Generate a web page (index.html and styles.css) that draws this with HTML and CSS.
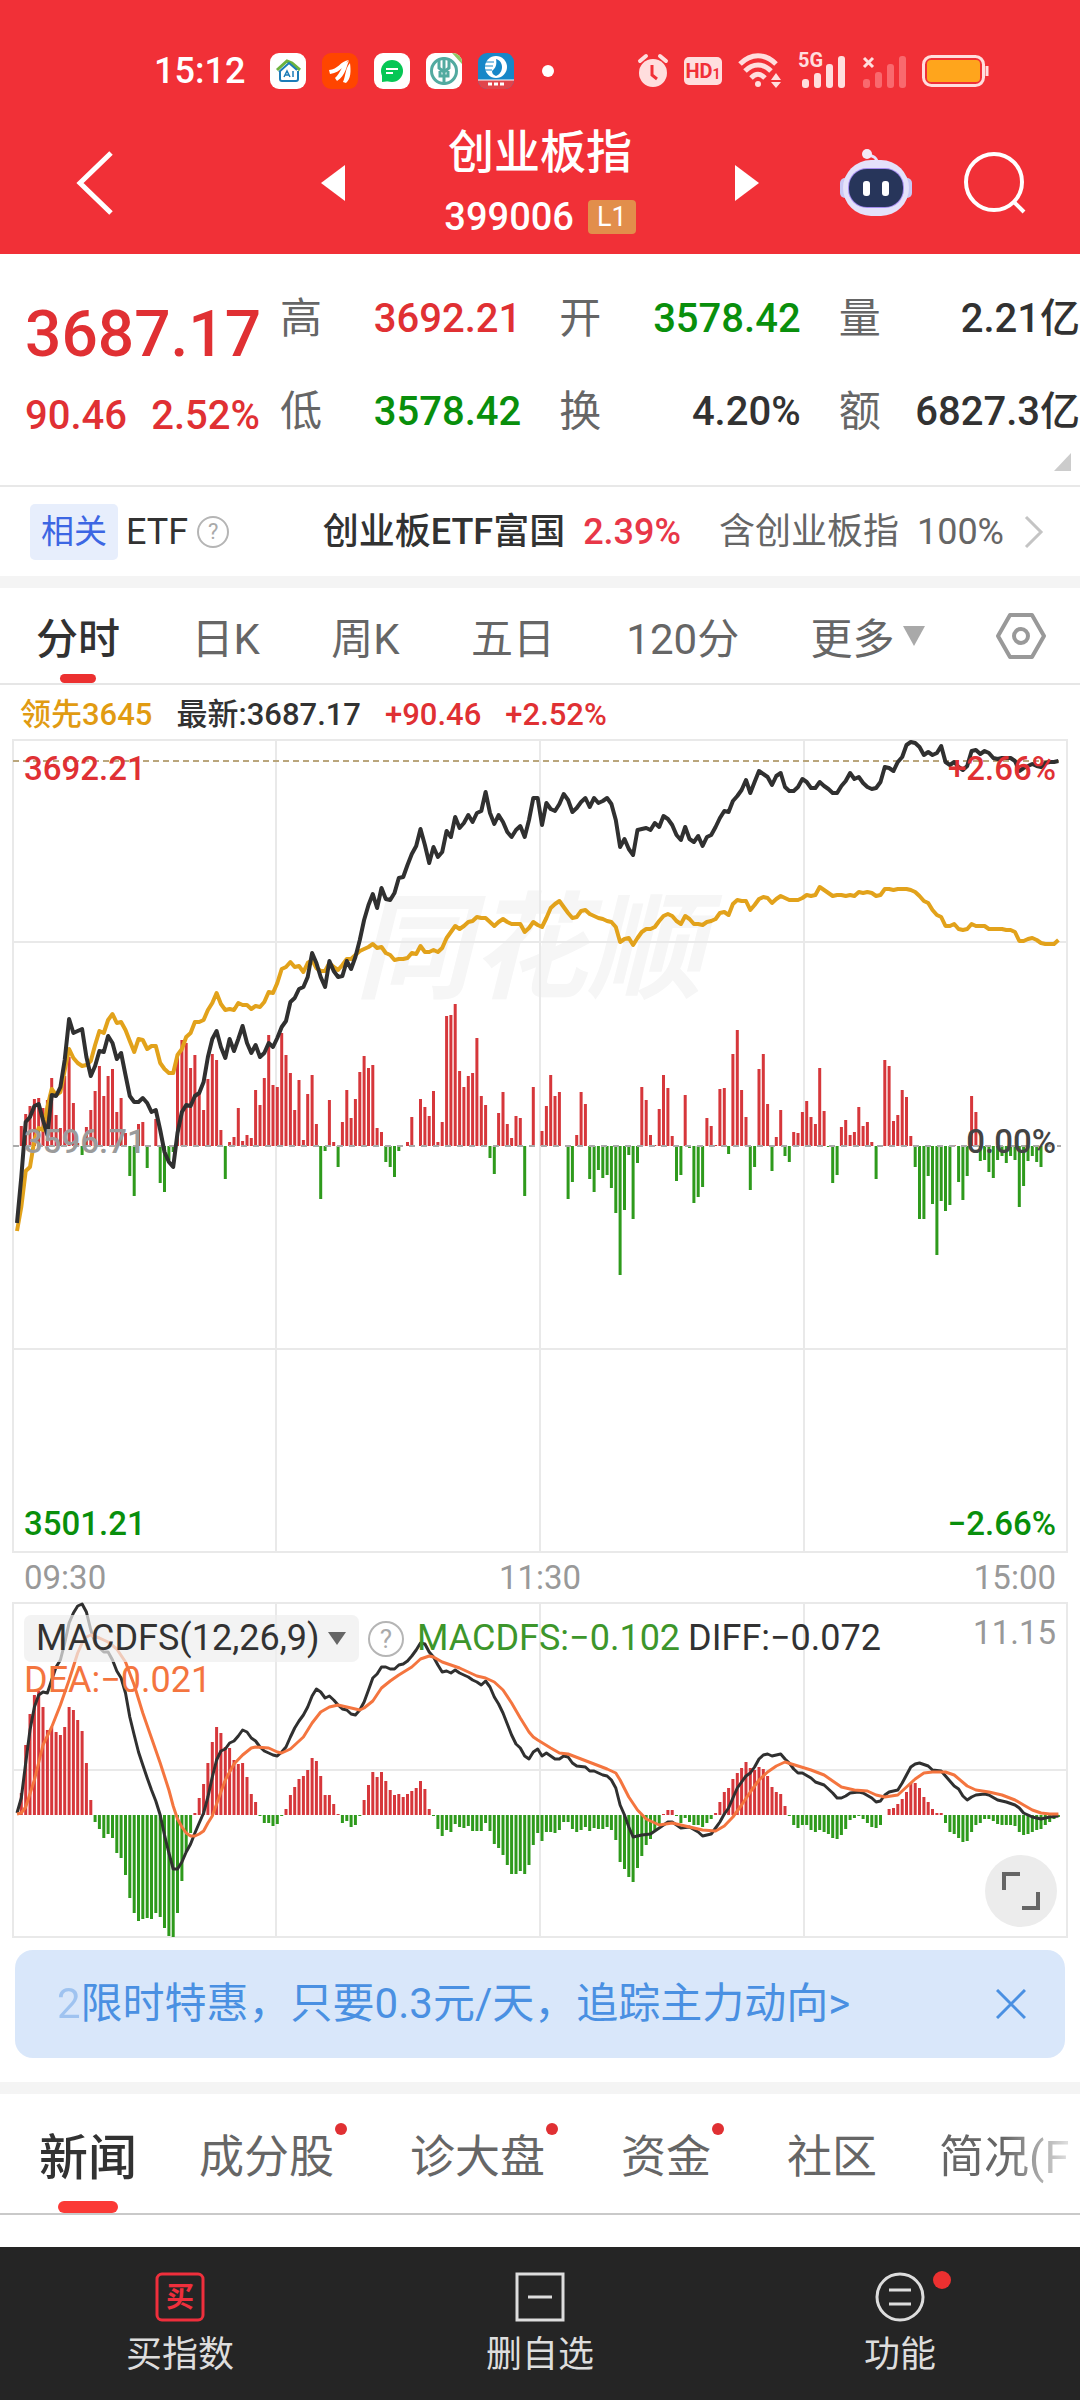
FILE: index.html
```html
<!DOCTYPE html>
<html lang="zh-CN">
<head>
  <meta charset="UTF-8">
  <meta name="viewport" content="width=device-width">
  <title>创业板指 399006</title>
  <link rel="stylesheet" href="styles.css">
</head>
<body>
  <header class="top">
    <!-- Status bar -->
    <div class="status">
      <div class="status-left">
        <span class="clock">15:12</span>
        <svg width="36" height="36" viewBox="0 0 36 36">
          <rect width="36" height="36" rx="9" fill="#fff"/>
          <path d="M10 18v8a2 2 0 0 0 2 2h14a2 2 0 0 0 2-2v-8" fill="none" stroke="#1c7cb8" stroke-width="2"/>
          <path d="M7 17 17 8l5 2 8 7" fill="none" stroke="#6cb33f" stroke-width="3"/>
          <path d="M9 19 19 10l8 7" fill="none" stroke="#1c7cb8" stroke-width="2"/>
          <path d="M14 24l3-6 3 6m-5-2h4M23 18v6" fill="none" stroke="#1c7cb8" stroke-width="1.5"/>
        </svg>
        <svg width="36" height="36" viewBox="0 0 36 36">
          <rect width="36" height="36" rx="9" fill="#ff4500"/>
          <path d="M7 17C16 17 18 8 27 7 21 12 20 19 8 21zM13 25c6-5 6-13 14-17-3 6-3 14-12 20zM21 29c3-7 2-13 7-19 1 8 1 16-4 20z" fill="#fff"/>
        </svg>
        <svg width="36" height="36" viewBox="0 0 36 36">
          <rect width="36" height="36" rx="9" fill="#fff"/>
          <circle cx="18" cy="18" r="11" fill="#06c755"/>
          <path d="M8 19v10l8-1z" fill="#06c755"/>
          <path d="M12 16h12M12 20h7" stroke="#fff" stroke-width="2"/>
        </svg>
        <svg width="36" height="36" viewBox="0 0 36 36">
          <rect width="36" height="36" rx="9" fill="#fff"/>
          <circle cx="18" cy="18" r="12.500" fill="none" stroke="#52aaa0" stroke-width="3"/>
          <path d="M18 4v28M13 7v8l5 4 5-4V7M14 18v5h8v-5" fill="none" stroke="#52aaa0" stroke-width="3"/>
          <path d="M26 0h1a9 9 0 0 1 9 9v2z" fill="#8fc866"/>
        </svg>
        <svg width="36" height="36" viewBox="0 0 36 36">
          <rect width="36" height="36" rx="9" fill="#1787c8"/>
          <path d="M0 27h36a9 9 0 0 1-9 9H9a9 9 0 0 1-9-9z" fill="#e0454c"/>
          <path d="M0 27h36" stroke="#fff"/>
          <circle cx="18" cy="14" r="11" fill="#fff"/>
          <path d="M18 6c8 2 8 14 0 17-3-1-4-3-4-5 4-3 5-7 4-12z" fill="#1787c8"/>
          <path d="M7 9h9M6 13h9M7 17h7" stroke="#1787c8"/>
          <path d="M10 31h4m2 0h4m2 0h4" stroke="#fff" stroke-width="3"/>
        </svg>
        <i class="more-dot"></i>
      </div>
      <div class="status-right">
        <svg width="32" height="36" viewBox="0 0 32 36" fill="none" stroke="#ffdede">
          <circle cx="16" cy="20" r="14" fill="#ffdede" stroke="none"/>
          <path d="M3 8l6-5M29 8l-6-5" stroke-width="4" stroke-linecap="round"/>
          <path d="M15 12v10l5 4" stroke="#f13037" stroke-width="3"/>
        </svg>
        <span class="hd">HD<small>1</small></span>
        <svg width="46" height="36" viewBox="0 0 46 36" fill="none" stroke="#ffdede" stroke-width="5">
          <path d="M3 11c11-11 25-11 36 0M8 18c8-8 18-8 26 0M14 25c5-5 9-5 14 0"/>
          <circle cx="21" cy="31" r="3" fill="#ffdede" stroke="none"/>
          <path d="M34 27l5-7 5 7zM34 29l5 6 5-6z" fill="#ffdede" stroke="none"/>
        </svg>
        <span class="cell">
          <b>5G</b>
          <svg width="48" height="36" viewBox="0 0 48 36" fill="#ffdede">
            <rect x="4" y="26" width="7" height="9" rx="3"/><rect x="16" y="20" width="7" height="15" rx="3"/>
            <rect x="28" y="11" width="7" height="24" rx="3"/><rect x="40" y="3" width="7" height="32" rx="3"/>
          </svg>
        </span>
        <svg width="46" height="36" viewBox="0 0 46 36" fill="#f9696e">
          <path d="M3 5l9 9m0-9l-9 9" stroke="#ffdede" stroke-width="3"/>
          <rect x="2" y="26" width="7" height="9" rx="3"/><rect x="14" y="19" width="7" height="16" rx="3"/>
          <rect x="26" y="11" width="7" height="24" rx="3"/><rect x="38" y="3" width="7" height="32" rx="3"/>
        </svg>
        <svg width="68" height="32" viewBox="0 0 68 32">
          <rect x="1.500" y="1.500" width="60" height="29" rx="8" fill="none" stroke="#ffdede" stroke-width="3"/>
          <rect x="5" y="5" width="53" height="22" rx="4" fill="#ffa51c"/>
          <path d="M65 11v10" stroke="#ffdede" stroke-width="3"/>
        </svg>
      </div>
    </div>

    <!-- Title bar -->
    <div class="nav">
      <button class="icon-btn" aria-label="返回">
        <svg width="38" height="64" viewBox="0 0 38 64" fill="none" stroke="#fff" stroke-width="5"><path d="M35 2 4 32l31 30"/></svg>
      </button>
      <div class="nav-title">
        <button class="icon-btn" aria-label="上一个"><svg width="24" height="36" viewBox="0 0 24 36"><path d="M24 0v36L0 18z" fill="#fff"/></svg></button>
        <div class="name">
          <h1>创业板指</h1>
          <p>399006 <span class="level">L1</span></p>
        </div>
        <button class="icon-btn" aria-label="下一个"><svg width="24" height="36" viewBox="0 0 24 36"><path d="M0 0v36l24-18z" fill="#fff"/></svg></button>
      </div>
      <div class="nav-right">
        <button class="icon-btn" aria-label="助手">
          <svg width="72" height="68" viewBox="0 0 72 68">
            <path d="M37 16c1-7-3-9-9-10" fill="none" stroke="#e7e2fb" stroke-width="3"/>
            <circle cx="27" cy="5" r="5" fill="#f4e9f8"/>
            <rect x="0" y="29" width="12" height="20" rx="5" fill="#c9c8f4"/><rect x="60" y="29" width="12" height="20" rx="5" fill="#c9c8f4"/>
            <rect x="3" y="11" width="66" height="56" rx="28" fill="#e4e1fa"/>
            <rect x="8" y="19" width="56" height="40" rx="19" fill="#a58cf0"/>
            <rect x="9" y="20" width="54" height="38" rx="18" fill="#27355a"/>
            <rect x="23" y="32" width="7" height="15" rx="3" fill="#fff"/><rect x="42" y="32" width="7" height="15" rx="3" fill="#fff"/>
          </svg>
        </button>
        <button class="icon-btn" aria-label="搜索">
          <svg width="62" height="62" viewBox="0 0 62 62" fill="none" stroke="#fff" stroke-width="4"><circle cx="30" cy="30" r="28"/><path d="M50 50l10 10"/></svg>
        </button>
      </div>
    </div>
  </header>

  <!-- Quote -->
  <section class="quote">
    <div class="last up">
      <strong>3687.17</strong>
      <p><span>90.46</span><span>2.52%</span></p>
    </div>
    <dl class="figures">
      <div><dt>高</dt><dd class="up">3692.21</dd></div>
      <div><dt>开</dt><dd class="down">3578.42</dd></div>
      <div><dt>量</dt><dd>2.21亿</dd></div>
      <div><dt>低</dt><dd class="down">3578.42</dd></div>
      <div><dt>换</dt><dd>4.20%</dd></div>
      <div><dt>额</dt><dd>6827.3亿</dd></div>
    </dl>
    <i class="corner"></i>
  </section>

  <a class="etf" href="#etf">
    <span class="tag">相关</span>
    <span class="etf-label">ETF</span>
    <span class="help">?</span>
    <span class="etf-name">创业板ETF富国</span>
    <span class="etf-pct">2.39%</span>
    <span class="etf-part">含创业板指&nbsp; 100%</span>
    <svg width="20" height="34" viewBox="0 0 20 34" fill="none" stroke="#c4c4c4" stroke-width="3"><path d="M2 2l15 15L2 32"/></svg>
  </a>

  <!-- Period tabs -->
  <nav class="periods">
    <button class="on">分时</button>
    <button>日K</button>
    <button>周K</button>
    <button>五日</button>
    <button>120分</button>
    <button aria-haspopup="menu">更多<svg width="22" height="20" viewBox="0 0 22 20"><path d="M0 0h22L11 20z" fill="#a9a9a9"/></svg></button>
    <button aria-label="设置">
      <svg width="50" height="48" viewBox="0 0 50 48" fill="none" stroke="#999" stroke-width="4" stroke-linejoin="round"><path d="M14 3h22l12 21-12 21H14L2 24z"/><circle cx="25" cy="24" r="7"/></svg>
    </button>
  </nav>

  <main class="charts">
    <p class="legend">
      <span class="lead">领先3645</span><span>最新:3687.17</span><span class="up">+90.46</span><span class="up">+2.52%</span>
    </p>

    <div class="plot">
      <svg id="priceChart" viewBox="0 0 1054 812">
        <text class="watermark" x="342" y="249">同花顺</text>
      </svg>
      <span class="mark top-left up">3692.21</span>
      <span class="mark top-right up">+2.66%</span>
      <span class="mark mid-left">3596.71</span>
      <span class="mark mid-right">0.00%</span>
      <span class="mark bottom-left down">3501.21</span>
      <span class="mark bottom-right down">−2.66%</span>
    </div>

    <div class="times"><span>09:30</span><span>11:30</span><span>15:00</span></div>

    <div class="plot">
      <svg id="macdChart" viewBox="0 0 1054 334"></svg>
      <div class="macd-head">
        <label class="picker">
          <select aria-label="指标"><option>MACDFS(12,26,9)</option></select>
          <svg width="18" height="13" viewBox="0 0 18 13"><path d="M0 0h18L9 13z" fill="#666"/></svg>
        </label>
        <span class="help big">?</span>
        <span class="macd-val">MACDFS:−0.102</span>
        <span>DIFF:−0.072</span>
        <span class="dea">DEA:−0.021</span>
      </div>
      <span class="mark macd-max">11.15</span>
      <button class="expand" aria-label="全屏">
        <svg width="38" height="38" viewBox="0 0 38 38" fill="none" stroke="#666" stroke-width="4"><path d="M2 18V2h16M20 36h16V20"/></svg>
      </button>
    </div>

    <div class="promo">
      <a href="#promo"><span class="fade">2</span>限时特惠，只要0.3元/天，追踪主力动向&gt;</a>
      <button class="icon-btn" aria-label="关闭">
        <svg width="30" height="30" viewBox="0 0 30 30" stroke="#4a90e2" stroke-width="3"><path d="M1 1l28 28M29 1L1 29"/></svg>
      </button>
    </div>
  </main>

  <!-- News tabs -->
  <nav class="news">
    <button class="on">新闻</button>
    <button class="dot">成分股</button>
    <button class="dot">诊大盘</button>
    <button class="dot">资金</button>
    <button>社区</button>
    <button class="more">简况(F</button>
  </nav>

  <footer class="bar">
    <button>
      <svg width="50" height="50" viewBox="0 0 50 50" fill="none" stroke="#ef2f3c" stroke-width="3">
        <rect x="2" y="2" width="46" height="46" rx="5"/>
        <text x="25" y="35" class="buy">买</text>
      </svg>
      买指数
    </button>
    <button>
      <svg width="50" height="50" viewBox="0 0 50 50" fill="none" stroke="#ddd" stroke-width="3"><rect x="2" y="2" width="46" height="46"/><path d="M13 25h24"/></svg>
      删自选
    </button>
    <button class="dot">
      <svg width="50" height="50" viewBox="0 0 50 50" fill="none" stroke="#ddd" stroke-width="3"><circle cx="25" cy="25" r="23"/><path d="M14 18h22M14 32h22"/></svg>
      功能
    </button>
  </footer>

  <script src="chart.js"></script>
</body>
</html>
```
FILE: styles.css
```css
* { box-sizing: border-box; }
body {
  margin: 0;
  min-height: 100vh;
  display: flex;
  flex-direction: column;
  background: #fff;
  color: #323232;
  font-family: Roboto, "Noto Sans CJK SC", sans-serif;
  font-size: 36px;
  overflow-x: hidden;
}
h1, p, dl, dd { margin: 0; }
button {
  border: 0;
  padding: 0;
  background: none;
  color: inherit;
  font: inherit;
}
a { color: inherit; text-decoration: none; }
svg { display: block; flex: none; }
.up { color: #e03033; }
.down { color: #098f0c; }

/* header */
.top {
  background: #f13037;
  color: #fff;
}
.status {
  display: flex;
  justify-content: space-between;
  align-items: center;
  height: 112px;
  padding: 30px 90px 0 154px;
}
.status-left, .status-right {
  display: flex;
  align-items: center;
}
.status-left { gap: 16px; }
.clock {
  width: 100px;
  font-weight: 500;
}
.more-dot {
  width: 12px;
  height: 12px;
  margin-left: 12px;
  border-radius: 50%;
  background: #fff;
}
.status-right { gap: 15px; }
.hd {
  display: flex;
  align-items: flex-end;
  justify-content: center;
  width: 38px;
  height: 28px;
  border-radius: 5px;
  background: #ffdede;
  color: #f13037;
  font-size: 20px;
  font-weight: 700;
  line-height: 28px;
}
.hd small { font-size: 14px; line-height: 22px; }
.cell { position: relative; }
.cell b {
  position: absolute;
  left: 0;
  top: -3px;
  color: #ffdede;
  font-size: 20px;
  line-height: 20px;
}
.nav {
  display: grid;
  grid-template-columns: 1fr 438px 1fr;
  height: 142px;
  padding: 0 54px 0 76px;
  align-items: center;
}
.nav-title {
  display: flex;
  justify-content: space-between;
  align-items: center;
  margin-left: -11px;
  margin-right: 11px;
}
.name { text-align: center; }
.name h1 {
  font-size: 46px;
  font-weight: 500;
  line-height: 68px;
}
.name p {
  display: flex;
  justify-content: center;
  align-items: center;
  gap: 14px;
  font-size: 38px;
  font-weight: 500;
  line-height: 62px;
}
.level {
  padding: 0 9px;
  border-radius: 4px;
  background: #e28e4b;
  font-size: 27px;
  font-weight: 400;
  line-height: 34px;
}
.nav-right {
  display: flex;
  justify-content: flex-end;
  align-items: center;
  gap: 52px;
}

/* quote */
.quote {
  position: relative;
  display: flex;
  gap: 20px;
  height: 231px;
  padding: 18px 0 0 25px;
  font-size: 40px;
  font-weight: 500;
}
.last { width: 235px; }
.last strong {
  display: block;
  font-size: 64px;
  font-weight: 500;
  line-height: 90px;
  padding-top: 18px;
}
.last p {
  display: flex;
  justify-content: space-between;
  line-height: 72px;
}
.figures {
  flex: 1;
  display: grid;
  grid-template-columns: repeat(3, 1fr);
  grid-auto-rows: 93px;
  column-gap: 38px;
}
.figures div {
  display: flex;
  justify-content: space-between;
  align-items: center;
}
.figures dt {
  color: #666;
  font-size: 42px;
  font-weight: 400;
  line-height: 60px;
}
.figures dd {
  line-height: 60px;
  white-space: nowrap;
}
.corner {
  position: absolute;
  right: 9px;
  bottom: 14px;
  border: solid transparent;
  border-width: 0 0 18px 17px;
  border-bottom-color: #ccc;
}
.etf {
  display: flex;
  align-items: center;
  height: 91px;
  padding: 0 36px 0 30px;
  border-top: 2px solid #e8e8e8;
  line-height: 56px;
  white-space: nowrap;
}
.tag {
  padding: 0 11px;
  margin-right: 8px;
  border-radius: 5px;
  background: #e7eefc;
  color: #3c66e3;
  font-size: 33px;
}
.help {
  width: 32px;
  height: 32px;
  margin-left: 9px;
  border: 2px solid #b5b5b5;
  border-radius: 50%;
  color: #aaa;
  font-size: 22px;
  line-height: 28px;
  text-align: center;
}
.etf-name {
  margin-left: auto;
  font-weight: 500;
}
.etf-pct {
  margin: 0 38px 0 18px;
  color: #e83748;
  font-weight: 500;
}
.etf-part {
  margin-right: 20px;
  color: #666;
}

/* period tabs */
.periods {
  display: flex;
  justify-content: space-between;
  height: 109px;
  padding: 0 34px 0 36px;
  border-top: 12px solid #f4f4f4;
  border-bottom: 2px solid #e6e6e6;
  color: #666;
  font-size: 42px;
}
.periods button {
  position: relative;
  display: flex;
  align-items: center;
  gap: 8px;
}
.on {
  color: #323232;
  font-weight: 500;
}
.on::after {
  content: "";
  position: absolute;
  left: 50%;
  bottom: 0;
  width: 36px;
  height: 9px;
  margin-left: -18px;
  border-radius: 5px;
  background: #ec3030;
}

/* charts */
.charts {
  padding: 0 13px 24px;
  border-bottom: 12px solid #f4f4f4;
}
.legend {
  display: flex;
  gap: 24px;
  padding: 4px 0 0 7px;
  font-size: 31px;
  font-weight: 500;
  line-height: 51px;
}
.lead { color: #e19b12; }
.plot {
  position: relative;
  font-size: 33px;
}
.plot > svg {
  width: 100%;
  height: auto;
  overflow: visible;
}
.watermark {
  fill: #f6f6f6;
  font-size: 116px;
  font-weight: 700;
  font-style: italic;
}
.grid { fill: none; stroke: #e9e9e9; stroke-width: 2; }
.zero { stroke: #aaa; stroke-width: 2; stroke-dasharray: 6 6; }
.last-line { stroke: #baa67c; stroke-width: 2; stroke-dasharray: 6 4; }
.bar-up { fill: #d6373b; }
.bar-down { fill: #2e9a1c; }
.line { fill: none; stroke-width: 4; stroke-linejoin: round; }
.thin { stroke-width: 3; }
.black { stroke: #303030; }
.yellow { stroke: #e2a21b; }
.orange { stroke: #f4753f; }
.mark {
  position: absolute;
  font-weight: 500;
  line-height: 40px;
}
.top-left, .mid-left, .bottom-left { left: 11px; }
.top-right, .mid-right, .bottom-right, .macd-max { right: 11px; }
.top-left, .top-right { top: 9px; }
.mid-left, .mid-right { top: 382px; }
.bottom-left, .bottom-right { bottom: 8px; }
.mid-left { color: #9b9b9b; }
.mid-right { color: #444; }
.macd-max { top: 10px; color: #999; font-weight: 400; }
.times {
  display: flex;
  justify-content: space-between;
  padding: 0 11px;
  color: #999;
  font-size: 33px;
  line-height: 51px;
}
.macd-head {
  position: absolute;
  left: 11px;
  top: 12px;
  display: flex;
  flex-wrap: wrap;
  align-items: center;
  width: 900px;
  font-size: 36px;
  line-height: 47px;
}
.picker {
  display: flex;
  align-items: center;
  gap: 8px;
  padding: 0 13px 0 12px;
  border-radius: 7px;
  background: rgba(238, 238, 238, 0.7);
}
.picker select {
  appearance: none;
  border: 0;
  padding: 0;
  background: none;
  color: inherit;
  font: inherit;
}
.big {
  width: 36px;
  height: 36px;
  margin-right: 13px;
  font-size: 26px;
  line-height: 32px;
}
.macd-val {
  margin-right: 8px;
  color: #3d962b;
}
.dea {
  width: 100%;
  color: #f4753f;
  line-height: 36px;
}
.expand {
  position: absolute;
  right: 10px;
  bottom: 10px;
  display: grid;
  place-items: center;
  width: 72px;
  height: 72px;
  border-radius: 50%;
  background: #ececec;
}
.promo {
  display: flex;
  justify-content: space-between;
  align-items: center;
  height: 108px;
  margin: 13px 2px 0;
  padding: 0 39px 0 42px;
  border-radius: 18px;
  background: #d9e7fa;
  color: #4a90e2;
  font-size: 42px;
  line-height: 60px;
  white-space: nowrap;
}
.fade { opacity: 0.4; }

/* bottom */
.news {
  display: flex;
  gap: 62px;
  height: 121px;
  padding-left: 39px;
  border-bottom: 2px solid #c9c9c9;
  color: #666;
  font-size: 45px;
  white-space: nowrap;
}
.news button { position: relative; flex: none; }
.news .on { font-size: 49px; }
.news .on::after {
  width: 60px;
  height: 12px;
  margin-left: -30px;
  border-radius: 6px;
  background: #fb3a36;
}
.news .dot { padding-right: 14px; }
.news .dot::after {
  content: "";
  position: absolute;
  right: 1px;
  top: 29px;
  width: 12px;
  height: 12px;
  border-radius: 50%;
  background: #e03033;
}
.news .more { mask-image: linear-gradient(to right, #000 50%, rgba(0, 0, 0, 0.2)); }
.bar {
  display: grid;
  grid-template-columns: repeat(3, 1fr);
  height: 153px;
  margin-top: auto;
  background: #252525;
  color: #ddd;
}
.bar button {
  position: relative;
  display: flex;
  flex-direction: column;
  align-items: center;
  gap: 6px;
  padding-top: 25px;
  line-height: 54px;
}
.bar .dot::after {
  content: "";
  position: absolute;
  left: 50%;
  top: 24px;
  width: 18px;
  height: 18px;
  margin-left: 33px;
  border-radius: 50%;
  background: #ec3030;
}
.buy {
  fill: #ef2f3c;
  stroke: none;
  font-size: 28px;
  font-weight: 700;
  text-anchor: middle;
}
```
FILE: chart.js
```javascript
// one value per trading minute, y in chart units from the top
const price = [483,437,382,377,366,364,380,395,355,356,347,320,279,293,291,289,317,336,326,311,312,296,303,319,313,335,356,362,362,358,363,372,370,390,412,422,427,393,372,365,366,356,353,342,317,299,291,307,318,299,311,299,286,303,313,305,317,313,303,307,
  298,287,281,262,258,249,247,237,213,223,237,247,221,231,237,236,221,229,217,200,180,165,154,168,148,159,160,153,138,137,125,114,106,89,105,123,107,117,112,91,97,77,88,83,75,82,73,71,52,73,84,75,82,92,97,90,86,97,80,58,
  58,85,63,69,71,64,54,60,72,68,62,58,67,58,63,61,58,64,80,107,99,109,115,90,89,88,90,83,87,76,79,85,95,100,87,99,102,96,106,97,95,87,78,71,72,61,56,50,40,53,42,31,34,37,45,36,33,47,51,51,
  47,39,42,48,48,42,46,49,53,53,46,41,33,39,37,43,47,49,48,42,27,28,31,22,17,5,2,3,7,15,12,15,13,6,22,25,22,27,30,26,11,10,14,11,13,18,19,18,18,18,21,31,28,26,24,26,27,23,22,22,21];

const lead = [491,467,431,427,400,388,390,367,349,355,352,330,309,318,323,326,325,321,305,291,293,280,274,283,282,290,301,312,299,300,309,306,306,323,329,333,333,315,309,297,293,282,282,280,270,263,253,264,270,269,270,263,265,265,269,266,267,262,252,253,
  243,229,227,222,227,226,232,223,220,228,231,231,223,227,230,225,219,219,215,211,209,207,204,208,207,213,215,220,219,219,218,213,214,206,212,212,210,212,208,198,192,186,189,186,182,181,177,178,178,182,186,182,179,182,184,184,184,192,188,182,
  185,187,178,168,164,161,167,173,178,177,171,170,174,176,178,179,181,182,187,202,199,198,205,198,192,189,189,187,181,176,174,176,181,184,176,179,184,184,185,182,181,179,173,172,175,164,160,161,161,170,165,159,157,158,163,159,156,158,160,160,
  160,158,155,156,155,147,150,153,156,155,155,156,155,156,152,153,152,153,156,155,149,149,150,149,149,149,150,152,156,161,163,170,175,177,186,186,184,189,190,189,184,186,186,186,189,189,189,189,190,190,192,201,201,199,198,200,203,204,204,204,200];

const volume = [0,20,32,40,47,48,38,46,68,31,18,70,89,43,3,-9,19,36,55,80,50,70,77,34,48,13,-30,-50,22,24,-22,0,27,-37,-46,-14,-6,90,106,103,78,91,52,36,67,92,86,16,-33,4,9,38,5,11,8,56,41,68,111,61,
  59,113,91,73,36,66,6,52,71,22,-53,-5,46,4,-21,24,56,28,47,74,90,78,81,18,14,-16,-21,-31,-5,0,4,29,0,47,39,30,55,4,24,130,131,142,75,59,70,73,108,50,41,-12,-28,33,54,22,8,30,28,-50,0,59,
  0,15,40,71,50,54,0,-53,-36,11,54,42,-33,-46,-24,-32,-29,-42,-67,-129,-64,-9,-73,-17,59,46,11,1,37,71,58,10,-35,-29,51,-2,-57,-51,-41,28,20,1,57,58,-8,92,116,56,29,-44,-21,77,92,42,-25,9,36,-10,-16,14,
  13,34,45,29,22,78,35,-1,-37,-29,19,26,11,14,39,20,24,4,-33,-1,86,80,25,31,56,49,10,-21,-73,-73,-30,-58,-109,-55,-65,-59,1,-36,-54,-30,50,34,-15,-14,-26,-32,-14,-10,-17,-10,-14,-61,-40,-15,-10,-16,-21,0,0,0,0];

const macd = [0,22,70,101,120,124,108,85,88,83,80,88,108,105,95,84,52,15,-7,-14,-23,-19,-23,-38,-43,-60,-83,-98,-106,-104,-103,-104,-98,-102,-113,-121,-122,-98,-66,-37,-18,2,17,31,52,73,88,82,68,67,55,51,52,38,21,13,-1,-8,-8,-11,
  -9,-1,6,20,28,36,39,45,57,54,39,20,20,11,1,-8,-6,-12,-10,-1,15,30,43,38,43,34,25,20,21,18,21,24,27,34,26,6,-1,-14,-21,-15,-17,-9,-12,-13,-11,-16,-16,-16,-8,-16,-29,-33,-40,-50,-59,-59,-56,-59,-50,-30,
  -18,-26,-17,-17,-18,-15,-7,-7,-14,-17,-15,-12,-16,-13,-14,-14,-12,-15,-25,-47,-54,-62,-67,-53,-41,-30,-24,-15,-10,1,5,5,-1,-8,-3,-7,-10,-10,-12,-8,-4,2,13,23,27,36,42,47,53,47,45,48,46,39,28,23,21,9,-1,-10,
  -13,-10,-10,-15,-17,-15,-17,-19,-23,-24,-20,-14,-5,-3,-1,-4,-8,-12,-13,-10,0,6,7,11,16,23,32,32,27,18,13,6,2,2,-8,-17,-19,-23,-27,-26,-17,-10,-8,-4,-4,-6,-9,-10,-10,-10,-11,-17,-20,-19,-17,-15,-14,-10,-7,-4,-2];

// [minute, y]
const diff = [[0,210],[1,195],[2,160],[3,127],[4,104],[5,92],[6,89],[7,90],[8,77],[9,64],[10,57],[11,40],[12,20],[13,10],[14,3],[15,1],[16,9],[17,27],[18,40],[19,45],[20,49],[21,49],[22,57],[23,68],[24,75],[25,90],[26,114],[27,132],[28,149],[29,162],
  [30,175],[31,187],[32,198],[33,212],[34,232],[35,250],[36,266],[37,266],[38,259],[39,249],[40,241],[41,230],[42,220],[43,210],[44,194],[45,174],[46,157],[47,148],[48,146],[49,140],[50,138],[51,133],[52,127],[53,129],[54,135],[55,138],[56,144],[57,148],[58,150],[59,152],
  [60,153],[61,149],[62,144],[63,134],[64,125],[65,118],[66,112],[67,104],[68,93],[69,86],[70,89],[71,95],[72,93],[73,97],[74,102],[75,106],[76,107],[77,111],[78,112],[79,107],[80,99],[81,87],[82,75],[83,71],[84,64],[85,64],[86,66],[87,66],[88,62],[89,61],
  [90,58],[91,53],[92,47],[93,40],[94,41],[95,49],[96,54],[97,62],[98,69],[99,68],[100,70],[101,67],[102,70],[103,72],[104,74],[105,77],[106,79],[107,82],[108,78],[109,84],[110,94],[111,101],[112,110],[113,121],[114,132],[115,141],[116,145],[117,153],[118,156],[119,149],
  [120,146],[121,153],[122,150],[123,153],[124,156],[125,156],[126,153],[127,154],[128,160],[129,163],[131,164],[132,168],[133,168],[134,170],[135,172],[136,173],[137,177],[138,185],[139,202],[140,212],[141,224],[142,234],[143,233],[144,232],[146,231],[148,225],[150,219],[151,219],
  [153,225],[155,224],[157,229],[158,233],[160,231],[161,225],[162,219],[163,211],[164,205],[165,195],[166,185],[167,179],[168,173],[169,170],[170,164],[171,156],[172,152],[173,151],[174,153],[176,151],[177,156],[178,160],[179,166],[180,170],[181,170],[183,175],[184,179],[186,182],
  [188,190],[189,195],[190,195],[191,193],[192,190],[194,189],[195,190],[197,195],[198,199],[199,198],[200,192],[201,189],[203,187],[204,180],[205,172],[206,164],[207,161],[208,160],[210,163],[211,167],[213,168],[214,173],[216,183],[217,186],[218,193],[219,197],[220,194],[221,192],
  [223,191],[224,192],[226,197],[228,199],[230,202],[231,205],[232,210],[233,212],[234,214],[236,216],[238,214],[240,213]];

const dea = [[0,211],[1,210],[2,204],[4,177],[6,142],[8,124],[10,102],[12,77],[14,50],[15,40],[16,34],[17,32],[19,35],[21,39],[23,46],[25,59],[27,82],[29,110],[31,135],[33,160],[35,187],[36,203],[37,216],[38,224],[39,230],[40,233],[41,233],[42,231],[43,228],[44,220],[45,213],
  [47,189],[48,177],[50,161],[52,152],[54,145],[55,144],[58,145],[60,149],[61,150],[63,146],[66,134],[68,120],[70,109],[72,104],[74,102],[76,104],[79,107],[80,105],[82,98],[84,85],[86,78],[88,72],[91,64],[93,56],[95,53],[96,54],[98,59],[102,65],[106,73],[108,75],[110,79],
  [112,87],[114,100],[116,115],[118,129],[119,134],[120,137],[123,145],[125,150],[127,151],[130,156],[133,161],[136,166],[138,170],[139,177],[141,194],[143,207],[145,216],[148,222],[151,220],[154,223],[158,227],[161,228],[163,223],[165,214],[167,202],[169,189],[171,177],[173,169],
  [175,163],[177,159],[180,163],[183,167],[186,172],[188,178],[190,184],[193,187],[196,188],[198,192],[200,194],[203,192],[205,184],[207,176],[209,170],[211,169],[214,169],[216,172],[219,183],[221,187],[224,189],[227,192],[230,197],[232,202],[234,207],[236,210],[238,211],[240,211]];

const NS = 'http://www.w3.org/2000/svg';
const x = i => (4 + i * 4.339).toFixed(1);

function add(svg, tag, attrs) {
  const el = document.createElementNS(NS, tag);
  for (const k in attrs) el.setAttribute(k, attrs[k]);
  svg.appendChild(el);
}

function bars(svg, data, zero) {
  data.forEach((v, i) => {
    if (!v) return;
    add(svg, 'rect', {
      x: (x(i) - 1.5).toFixed(1), y: v > 0 ? zero - v : zero,
      width: 3, height: Math.abs(v), class: v > 0 ? 'bar-up' : 'bar-down'
    });
  });
}

function line(svg, pts, cls) {
  add(svg, 'polyline', { points: pts.map(p => x(p[0]) + ',' + p[1]).join(' '), class: 'line ' + cls });
}

// intraday chart
const p = document.getElementById('priceChart');
add(p, 'path', { class: 'grid', d: 'M0 0H1054V812H0ZM0 202H1054M0 609H1054M263 0V812M527 0V812M791 0V812' });
add(p, 'path', { class: 'last-line', d: 'M0 21H1048' });
bars(p, volume, 406);
add(p, 'path', { class: 'zero', d: 'M0 406H1048' });
line(p, lead.map((y, i) => [i, y]), 'yellow');
line(p, price.map((y, i) => [i, y]), 'black');

// MACD chart
const m = document.getElementById('macdChart');
add(m, 'path', { class: 'grid', d: 'M0 0H1054V334H0ZM0 167H1054M263 0V334M527 0V334M791 0V334' });
bars(m, macd, 212);
line(m, diff, 'thin black');
line(m, dea, 'thin orange');
```
